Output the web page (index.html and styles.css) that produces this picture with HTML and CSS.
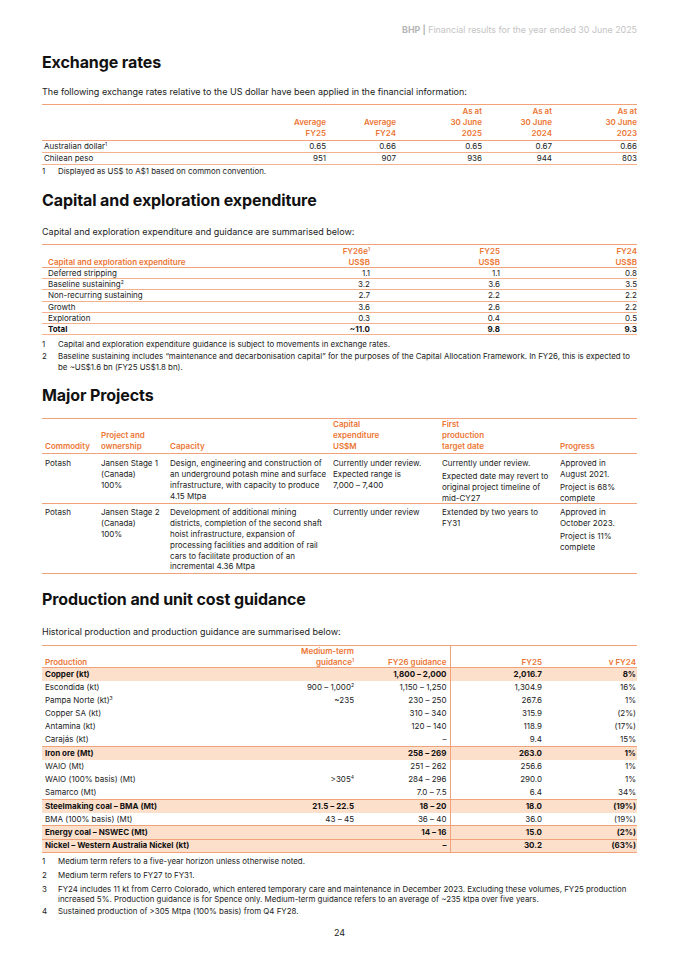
FILE: index.html
```html
<!DOCTYPE html>
<html>
<head>
<meta charset="utf-8">
<link rel="stylesheet" href="styles.css">
</head>
<body>
<div class="page">
  <div class="runhead"><b>BHP |</b> Financial results for the year ended 30 June 2025</div>

  <h2 class="h-ex">Exchange rates</h2>
  <p class="intro">The following exchange rates relative to the US dollar have been applied in the financial information:</p>
  <table class="t t-ex">
    <colgroup><col class="c1"><col class="c2"><col class="c3"><col class="c4"><col class="c5"><col class="c6"></colgroup>
    <thead>
      <tr><th></th><th>Average<br>FY25</th><th>Average<br>FY24</th><th>As at<br>30 June<br>2025</th><th>As at<br>30 June<br>2024</th><th>As at<br>30 June<br>2023</th></tr>
    </thead>
    <tbody>
      <tr><td>Australian dollar<sup>1</sup></td><td>0.65</td><td>0.66</td><td>0.65</td><td>0.67</td><td>0.66</td></tr>
      <tr><td>Chilean peso</td><td>951</td><td>907</td><td>936</td><td>944</td><td>803</td></tr>
    </tbody>
  </table>
  <div class="notes notes-ex">
    <div class="note"><span class="n">1</span><span>Displayed as US$ to A$1 based on common convention.</span></div>
  </div>

  <h2 class="h-cap">Capital and exploration expenditure</h2>
  <p class="intro intro-cap">Capital and exploration expenditure and guidance are summarised below:</p>
  <table class="t t-cap">
    <colgroup><col class="k1"><col class="k2"><col class="k3"><col class="k4"></colgroup>
    <thead>
      <tr><th>Capital and exploration expenditure</th><th>FY26e<sup>1</sup><br>US$B</th><th>FY25<br>US$B</th><th>FY24<br>US$B</th></tr>
    </thead>
    <tbody>
      <tr><td>Deferred stripping</td><td>1.1</td><td>1.1</td><td>0.8</td></tr>
      <tr><td>Baseline sustaining<sup>2</sup></td><td>3.2</td><td>3.6</td><td>3.5</td></tr>
      <tr><td>Non-recurring sustaining</td><td>2.7</td><td>2.2</td><td>2.2</td></tr>
      <tr><td>Growth</td><td>3.6</td><td>2.6</td><td>2.2</td></tr>
      <tr><td>Exploration</td><td>0.3</td><td>0.4</td><td>0.5</td></tr>
      <tr class="total"><td>Total</td><td>~11.0</td><td>9.8</td><td>9.3</td></tr>
    </tbody>
  </table>
  <div class="notes notes-cap">
    <div class="note"><span class="n">1</span><span>Capital and exploration expenditure guidance is subject to movements in exchange rates.</span></div>
    <div class="note"><span class="n">2</span><span>Baseline sustaining includes “maintenance and decarbonisation capital” for the purposes of the Capital Allocation Framework. In FY26, this is expected to be ~US$1.6 bn (FY25 US$1.8 bn).</span></div>
  </div>

  <h2 class="h-mp">Major Projects</h2>
  <table class="t t-mp">
    <colgroup><col class="m1"><col class="m2"><col class="m3"><col class="m4"><col class="m5"><col class="m6"></colgroup>
    <thead>
      <tr><th>Commodity</th><th>Project and<br>ownership</th><th>Capacity</th><th>Capital<br>expenditure<br>US$M</th><th>First<br>production<br>target date</th><th>Progress</th></tr>
    </thead>
    <tbody>
      <tr class="r1">
        <td>Potash</td>
        <td>Jansen Stage 1<br>(Canada)<br>100%</td>
        <td>Design, engineering and construction of<br>an underground potash mine and surface<br>infrastructure, with capacity to produce<br>4.15 Mtpa</td>
        <td>Currently under review.<br>Expected range is<br>7,000 – 7,400</td>
        <td><p>Currently under review.</p><p>Expected date may revert to<br>original project timeline of<br>mid-CY27</p></td>
        <td><p>Approved in<br>August 2021.</p><p>Project is 68%<br>complete</p></td>
      </tr>
      <tr class="r2">
        <td>Potash</td>
        <td>Jansen Stage 2<br>(Canada)<br>100%</td>
        <td>Development of additional mining<br>districts, completion of the second shaft<br>hoist infrastructure, expansion of<br>processing facilities and addition of rail<br>cars to facilitate production of an<br>incremental 4.36 Mtpa</td>
        <td>Currently under review</td>
        <td>Extended by two years to<br>FY31</td>
        <td><p>Approved in<br>October 2023.</p><p>Project is 11%<br>complete</p></td>
      </tr>
    </tbody>
  </table>

  <h2 class="h-pr">Production and unit cost guidance</h2>
  <p class="intro intro-pr">Historical production and production guidance are summarised below:</p>
  <table class="t t-pr">
    <colgroup><col class="p1"><col class="p2"><col class="p3"><col class="p4"><col class="p5"></colgroup>
    <thead>
      <tr><th>Production</th><th>Medium-term<br>guidance<sup>1</sup></th><th class="div">FY26 guidance</th><th>FY25</th><th>v FY24</th></tr>
    </thead>
    <tbody>
      <tr class="sh"><td>Copper (kt)</td><td></td><td class="div">1,800 – 2,000</td><td>2,016.7</td><td>8%</td></tr>
      <tr><td>Escondida (kt)</td><td>900 – 1,000<sup>2</sup></td><td class="div">1,150 – 1,250</td><td>1,304.9</td><td>16%</td></tr>
      <tr><td>Pampa Norte (kt)<sup>3</sup></td><td>~235</td><td class="div">230 – 250</td><td>267.6</td><td>1%</td></tr>
      <tr><td>Copper SA (kt)</td><td></td><td class="div">310 – 340</td><td>315.9</td><td>(2%)</td></tr>
      <tr><td>Antamina (kt)</td><td></td><td class="div">120 – 140</td><td>118.9</td><td>(17%)</td></tr>
      <tr><td>Carajás (kt)</td><td></td><td class="div">–</td><td>9.4</td><td>15%</td></tr>
      <tr class="sh"><td>Iron ore (Mt)</td><td></td><td class="div">258 – 269</td><td>263.0</td><td>1%</td></tr>
      <tr><td>WAIO (Mt)</td><td></td><td class="div">251 – 262</td><td>256.6</td><td>1%</td></tr>
      <tr><td>WAIO (100% basis) (Mt)</td><td>&gt;305<sup>4</sup></td><td class="div">284 – 296</td><td>290.0</td><td>1%</td></tr>
      <tr><td>Samarco (Mt)</td><td></td><td class="div">7.0 – 7.5</td><td>6.4</td><td>34%</td></tr>
      <tr class="sh"><td>Steelmaking coal – BMA (Mt)</td><td>21.5 – 22.5</td><td class="div">18 – 20</td><td>18.0</td><td>(19%)</td></tr>
      <tr><td>BMA (100% basis) (Mt)</td><td>43 – 45</td><td class="div">36 – 40</td><td>36.0</td><td>(19%)</td></tr>
      <tr class="sh"><td>Energy coal – NSWEC (Mt)</td><td></td><td class="div">14 – 16</td><td>15.0</td><td>(2%)</td></tr>
      <tr class="sh last"><td>Nickel – Western Australia Nickel (kt)</td><td></td><td class="div">–</td><td>30.2</td><td>(63%)</td></tr>
    </tbody>
  </table>
  <div class="notes notes-pr">
    <div class="note"><span class="n">1</span><span>Medium term refers to a five-year horizon unless otherwise noted.</span></div>
    <div class="note"><span class="n">2</span><span>Medium term refers to FY27 to FY31.</span></div>
    <div class="note"><span class="n">3</span><span>FY24 includes 11 kt from Cerro Colorado, which entered temporary care and maintenance in December 2023. Excluding these volumes, FY25 production increased 5%. Production guidance is for Spence only. Medium-term guidance refers to an average of ~235 ktpa over five years.</span></div>
    <div class="note"><span class="n">4</span><span>Sustained production of &gt;305 Mtpa (100% basis) from Q4 FY28.</span></div>
  </div>

  <div class="pageno">24</div>
</div>
</body>
</html>
```

FILE: styles.css
```css
* { box-sizing: border-box; }
html, body { margin: 0; padding: 0; background: #fff; }
body {
  font-family: Inter, "Noto Sans", "Liberation Sans", sans-serif;
  color: #222;
  width: 679px;
}
.page { padding: 24px 42px 0 42px; width: 679px; }

.runhead {
  text-align: right;
  font-size: 8.9px;
  line-height: 12px;
  color: #c4c4c4;
}
.runhead b { font-weight: 700; color: #b5b5b5; }

h2 {
  font-size: 16px;
  font-weight: 700;
  color: #111;
  margin: 0;
  line-height: 20px;
  letter-spacing: -0.1px;
}
.h-ex { margin-top: 16px; }
.h-cap { margin-top: 13px; }
.h-mp { margin-top: 12px; }
.h-pr { margin-top: 15px; }

.intro {
  font-size: 9px;
  line-height: 12px;
  margin: 14px 0 0 0;
  color: #222;
}
.intro-cap { margin-top: 16px; }
.intro-pr { margin-top: 17px; }

.t {
  width: 595px;
  border-collapse: collapse;
  table-layout: fixed;
  font-size: 8px;
  color: #222;
}
.t th {
  color: #ec7634;
  font-weight: 600;
  vertical-align: bottom;
  text-align: right;
  padding: 0;
  line-height: 11px;
}
.t td { padding: 0; text-align: right; }
.t td:first-child, .t th:first-child { text-align: left; }
sup { font-size: 5px; vertical-align: 3px; line-height: 0; }

/* Exchange */
.t-ex { margin-top: 6px; border-top: 1.5px solid #f2a27a; }
.t-ex thead tr { border-bottom: 1.5px solid #f2a27a; }
.t-ex th { padding: 1px 0 1px; }
.t-ex td { height: 12px; line-height: 11px; border-bottom: 1.2px solid #f5b18e; }
.t-ex td:first-child { padding-left: 2px; }
.t-ex .c1 { width: 200px; }
.t-ex .c2 { width: 84px; }
.t-ex .c3 { width: 70px; }
.t-ex .c4 { width: 86px; }
.t-ex .c5 { width: 70px; }
.t-ex .c6 { width: 85px; }

.notes { font-size: 7.9px; line-height: 11px; color: #222; }
.note { display: flex; margin-bottom: 1px; }
.note .n { width: 16px; flex: none; }
.notes-ex { margin-top: 1px; }
.notes-cap { margin-top: 4px; }
.notes-pr { margin-top: 3px; line-height: 10.5px; }
.notes-pr .note { margin-bottom: 3.5px; }
.notes-pr .note:nth-child(3) { margin-bottom: 1px; }

/* Capex */
.t-cap { margin-top: 6px; border-top: 1.5px solid #f2a27a; }
.t-cap thead tr { border-bottom: 1.5px solid #f2a27a; }
.t-cap th { padding: 1px 0 0; line-height: 10.5px; }
.t-cap th:first-child { padding-left: 6px; }
.t-cap td { height: 11.2px; line-height: 10px; border-bottom: 1.2px solid #f5b18e; }
.t-cap td:first-child { padding-left: 6px; }
.t-cap .total td { font-weight: 700; color: #111; }
.t-cap .k1 { width: 270px; }
.t-cap .k2 { width: 58px; }
.t-cap .k3 { width: 130px; }
.t-cap .k4 { width: 137px; }

/* Major projects */
.t-mp { margin-top: 13px; border-top: 1.5px solid #f2a27a; }
.t-mp thead tr { border-bottom: 1.5px solid #f2a27a; }
.t-mp th { text-align: left; padding: 0 0 1px 3px; }
.t-mp td { text-align: left; vertical-align: top; padding: 4px 2px 0 3px; line-height: 10.8px; white-space: nowrap; }
.t-mp td p { margin: 0 0 2px; }
.t-mp td p:last-child { margin-bottom: 0; }
.t-mp tr.r1 { border-bottom: 1.5px solid #f2a27a; }
.t-mp tr.r2 { border-bottom: 1.5px solid #f2a27a; }
.t-mp tr.r2 td { padding-top: 3px; padding-bottom: 1px; }
.t-mp .m1 { width: 56px; }
.t-mp .m2 { width: 69px; }
.t-mp .m3 { width: 163px; }
.t-mp .m4 { width: 109px; }
.t-mp .m5 { width: 118px; }
.t-mp .m6 { width: 80px; }

/* Production */
.t-pr { margin-top: 7px; border-top: 1.5px solid #f2a27a; border-bottom: 1.5px solid #f2a27a; }
.t-pr thead tr { border-bottom: 1.5px solid #f2a27a; }
.t-pr th { padding: 0; line-height: 10.5px; }
.t-pr th:first-child { padding-left: 3px; }
.t-pr td { height: 13.2px; line-height: 11px; }
.t-pr td:first-child { padding-left: 3px; }
.t-pr .div { border-right: 1.5px solid #f2a27a; padding-right: 3px; }
.t-pr th.div { padding-right: 3px; }
.t-pr td:last-child, .t-pr th:last-child { padding-right: 1px; }
.t-pr tr.sh { background: #fde0cc; border-top: 1.5px solid #f2a27a; }
.t-pr tr.sh td { font-weight: 700; color: #111; }
.t-pr .p1 { width: 200px; }
.t-pr .p2 { width: 112px; }
.t-pr .p3 { width: 96px; }
.t-pr .p4 { width: 92px; }
.t-pr .p5 { width: 95px; }

.pageno { text-align: center; font-size: 9px; margin-top: 11px; color: #222; }
```
